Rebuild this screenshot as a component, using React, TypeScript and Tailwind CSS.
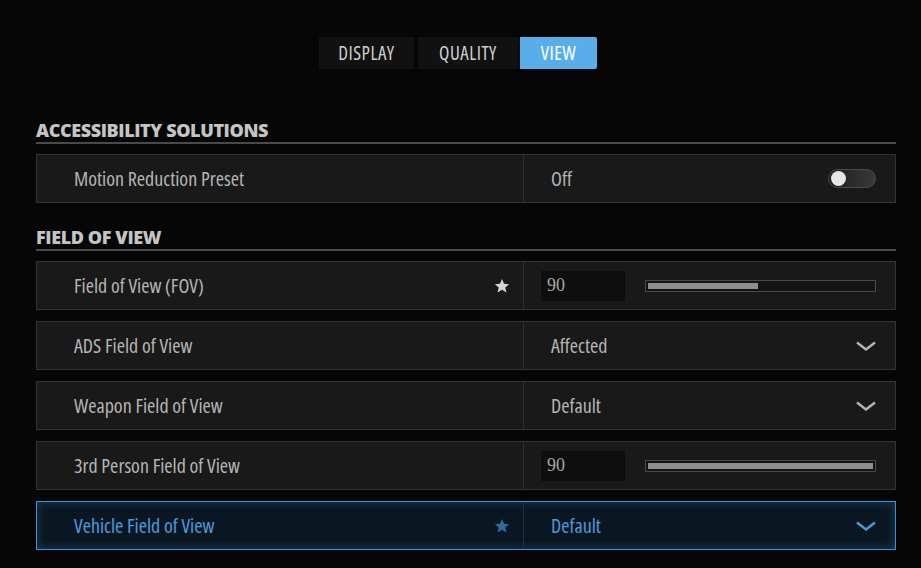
import React from "react";

const cond = "font-['Open_Sans',sans-serif] [font-stretch:condensed]";

function Star({ className }: { className?: string }) {
  return (
    <svg viewBox="0 0 24 24" className={className} fill="currentColor">
      <path d="M12 1.5l3.1 7.2 7.6.6-5.8 5 1.8 7.6L12 17.8l-6.7 4.1 1.8-7.6-5.8-5 7.6-.6z" />
    </svg>
  );
}

function Chevron({ className }: { className?: string }) {
  return (
    <svg viewBox="0 0 20 10" className={className} fill="none" stroke="currentColor" strokeWidth={2.4}>
      <path d="M1 1.5l9 7 9-7" />
    </svg>
  );
}

function SectionTitle({ children, className }: { children: React.ReactNode; className?: string }) {
  return (
    <div className={"border-b-2 border-[#4a4a4a] pb-px " + (className ?? "")}>
      <div className="font-['Open_Sans',sans-serif] text-[18px] leading-[22px] font-extrabold tracking-[-0.4px] text-[#c4c4c4]">
        {children}
      </div>
    </div>
  );
}

function Row({
  label,
  star,
  active,
  children,
  className,
}: {
  label: string;
  star?: boolean;
  active?: boolean;
  children: React.ReactNode;
  className?: string;
}) {
  return (
    <div
      className={
        "flex h-[49px] border " +
        cond +
        " " +
        (active
          ? "border-[#3e8fd2] bg-[#0a1722] shadow-[inset_0_0_10px_rgba(62,143,210,0.35)] "
          : "border-[#343434] bg-[#191919] ") +
        (className ?? "")
      }
    >
      <div className={"flex w-[487px] items-center border-r pr-[13px] pl-[37px] " + (active ? "border-[#1c3345]" : "border-[#2e2e2e]")}>
        <span className={"flex-1 text-[20px] " + (active ? "text-[#4a9bdc]" : "text-[#b5b5b5]")}>{label}</span>
        {star && <Star className={"h-[16px] w-[16px] " + (active ? "text-[#2f6c9e]" : "text-[#d4d4d4]")} />}
      </div>
      <div className={"flex flex-1 items-center " + (active ? "text-[#4a9bdc]" : "text-[#b5b5b5]")}>{children}</div>
    </div>
  );
}

function Slider({ pct }: { pct: number }) {
  return (
    <div className="flex flex-1 items-center pr-[19px] pl-[17px]">
      <div className="flex h-[30px] w-[84px] items-center bg-[#0e0e0e] pl-[6px] font-['Liberation_Serif',serif] text-[18px] text-[#a8a8a8]">
        90
      </div>
      <div className="ml-[20px] h-[12px] flex-1 border border-[#4a4a4a] bg-[#141414] p-[2px]">
        <div className="h-full bg-[#8f8f8f]" style={{ width: pct + "%" }} />
      </div>
    </div>
  );
}

function Select({ value }: { value: string }) {
  return (
    <div className="flex flex-1 items-center pr-[19px] pl-[27px]">
      <span className="flex-1 text-[20px]">{value}</span>
      <Chevron className="h-[10px] w-[20px]" />
    </div>
  );
}

export default function App() {
  const tab = "flex h-[32px] items-center justify-center text-[19px] tracking-[0.5px]";
  return (
    <div className="h-[568px] w-[921px] overflow-hidden bg-[#060606]">
      <div className={"flex pt-[37px] pl-[319px] " + cond}>
        <div className={tab + " w-[95px] bg-[#111111] text-[#cfcfcf]"}>DISPLAY</div>
        <div className={tab + " ml-[4px] w-[100px] bg-[#111111] text-[#cfcfcf]"}>QUALITY</div>
        <div className={tab + " ml-[2px] w-[77px] rounded-r-[2px] bg-[#58adea] text-white"}>VIEW</div>
      </div>

      <div className="w-[896px] pl-[36px]">
        <SectionTitle className="mt-[50px]">ACCESSIBILITY SOLUTIONS</SectionTitle>
        <Row label="Motion Reduction Preset" className="mt-[10px]">
          <div className="flex flex-1 items-center pr-[19px] pl-[27px]">
            <span className="flex-1 text-[20px]">Off</span>
            <div className="flex h-[19px] w-[48px] items-center rounded-full border border-[#4a4a4a] bg-[linear-gradient(90deg,#1c1c1c,#3a3a3a)] pl-[2px]">
              <div className="h-[15px] w-[15px] rounded-full bg-[#e6e6e6]" />
            </div>
          </div>
        </Row>

        <SectionTitle className="mt-[23px]">FIELD OF VIEW</SectionTitle>
        <Row label="Field of View (FOV)" star className="mt-[10px]">
          <Slider pct={49} />
        </Row>
        <Row label="ADS Field of View" className="mt-[11px]">
          <Select value="Affected" />
        </Row>
        <Row label="Weapon Field of View" className="mt-[11px]">
          <Select value="Default" />
        </Row>
        <Row label="3rd Person Field of View" className="mt-[11px]">
          <Slider pct={100} />
        </Row>
        <Row label="Vehicle Field of View" star active className="mt-[11px]">
          <Select value="Default" />
        </Row>
      </div>
    </div>
  );
}
